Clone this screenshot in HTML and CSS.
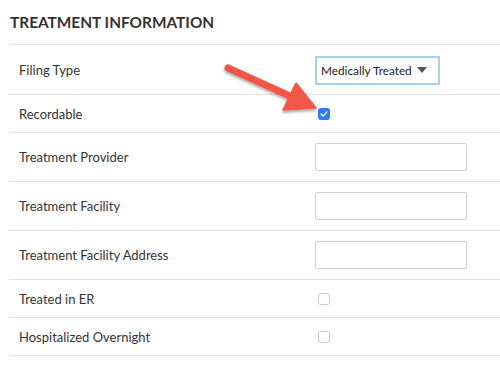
FILE: index.html
```html
<!DOCTYPE html>
<html>
<head>
	<title>Treatment Information</title>
	<meta name="viewport" content="width=device-width, initial-scale=1">
	<link rel="stylesheet" href="styles.css">
</head>
<body>
	<section class="panel">
		<h2 class="panel-title">TREATMENT INFORMATION</h2>
		<div class="row row-first">
			<span class="label">Filing Type</span>
			<div class="select">
				<span class="select-value">Medically Treated</span>
				<span class="caret"></span>
			</div>
		</div>
		<div class="row">
			<span class="label">Recordable</span>
			<span class="check checked">
				<svg width="12" height="12" viewBox="0 0 12 12"><path d="M3.2 6.2 L5.1 8.1 L8.9 3.9" fill="none" stroke="#fff" stroke-width="1.4" stroke-linecap="round" stroke-linejoin="round"/></svg>
			</span>
		</div>
		<div class="row row-tall">
			<span class="label">Treatment Provider</span>
			<input class="text-input" type="text">
		</div>
		<div class="row row-tall">
			<span class="label">Treatment Facility</span>
			<input class="text-input" type="text">
		</div>
		<div class="row row-tall">
			<span class="label">Treatment Facility Address</span>
			<input class="text-input" type="text">
		</div>
		<div class="row">
			<span class="label">Treated in ER</span>
			<span class="check"></span>
		</div>
		<div class="row">
			<span class="label">Hospitalized Overnight</span>
			<span class="check"></span>
		</div>

		<!-- annotation arrow over the form -->
		<svg class="arrow" width="500" height="385" viewBox="0 0 500 385">
			<defs>
				<filter id="shadow" x="-20%" y="-20%" width="140%" height="160%">
					<feDropShadow dx="0" dy="2" stdDeviation="1.5" flood-color="#000" flood-opacity="0.35"/>
				</filter>
			</defs>
			<g filter="url(#shadow)">
				<line x1="228" y1="68" x2="292" y2="97" stroke="#f2564a" stroke-width="7" stroke-linecap="round"/>
				<polygon points="316,108 283,110 296,83" fill="#f2564a" stroke="#f2564a" stroke-width="1.5" stroke-linejoin="round"/>
			</g>
		</svg>
	</section>
</body>
</html>
```

FILE: styles.css
```css
body{
	margin: 0;
	background-color: #fff;
	font-family: Lato, "Open Sans", sans-serif;
	color: #333;
}
.panel{
	position: relative;
	padding-left: 9px;
}
.panel-title{
	margin: 0;
	height: 44px;
	line-height: 44px;
	padding-left: 1px;
	font-size: 15.4px;
	font-weight: 700;
	color: #333;
	border-bottom: 1px solid #e2e2e2;
}
.row{
	display: grid;
	grid-template-columns: 296px 1fr;
	align-items: center;
	height: 37px;
	padding-left: 10px;
	border-bottom: 1px solid #e2e2e2;
}
.row-first{
	height: 49px;
}
.row-tall{
	height: 48px;
}
.label{
	font-size: 13px;
	color: #333;
}
.select{
	display: flex;
	align-items: center;
	box-sizing: border-box;
	width: 125px;
	height: 29px;
	margin-top: 1px;
	padding: 0 11px 0 4px;
	border: 2px solid #a9cfe8;
	font-size: 11.8px;
	color: #222;
}
.select-value{
	white-space: nowrap;
}
.caret{
	margin-left: auto;
	width: 0;
	height: 0;
	border-left: 5px solid transparent;
	border-right: 5px solid transparent;
	border-top: 6px solid #555;
}
.text-input{
	box-sizing: border-box;
	width: 152px;
	height: 28px;
	margin: 0;
	border: 1px solid #cfcfcf;
	border-radius: 2px;
	background: #fff;
}
.check{
	display: block;
	box-sizing: border-box;
	width: 12px;
	height: 12px;
	margin-left: 3px;
	border: 1px solid #c9c9c9;
	border-radius: 3px;
	background: #fff;
}
.check.checked{
	border: none;
	background: #2d7cf3;
}
.check svg{
	display: block;
}
.arrow{
	position: absolute;
	top: 0;
	left: 0;
	pointer-events: none;
}
```
